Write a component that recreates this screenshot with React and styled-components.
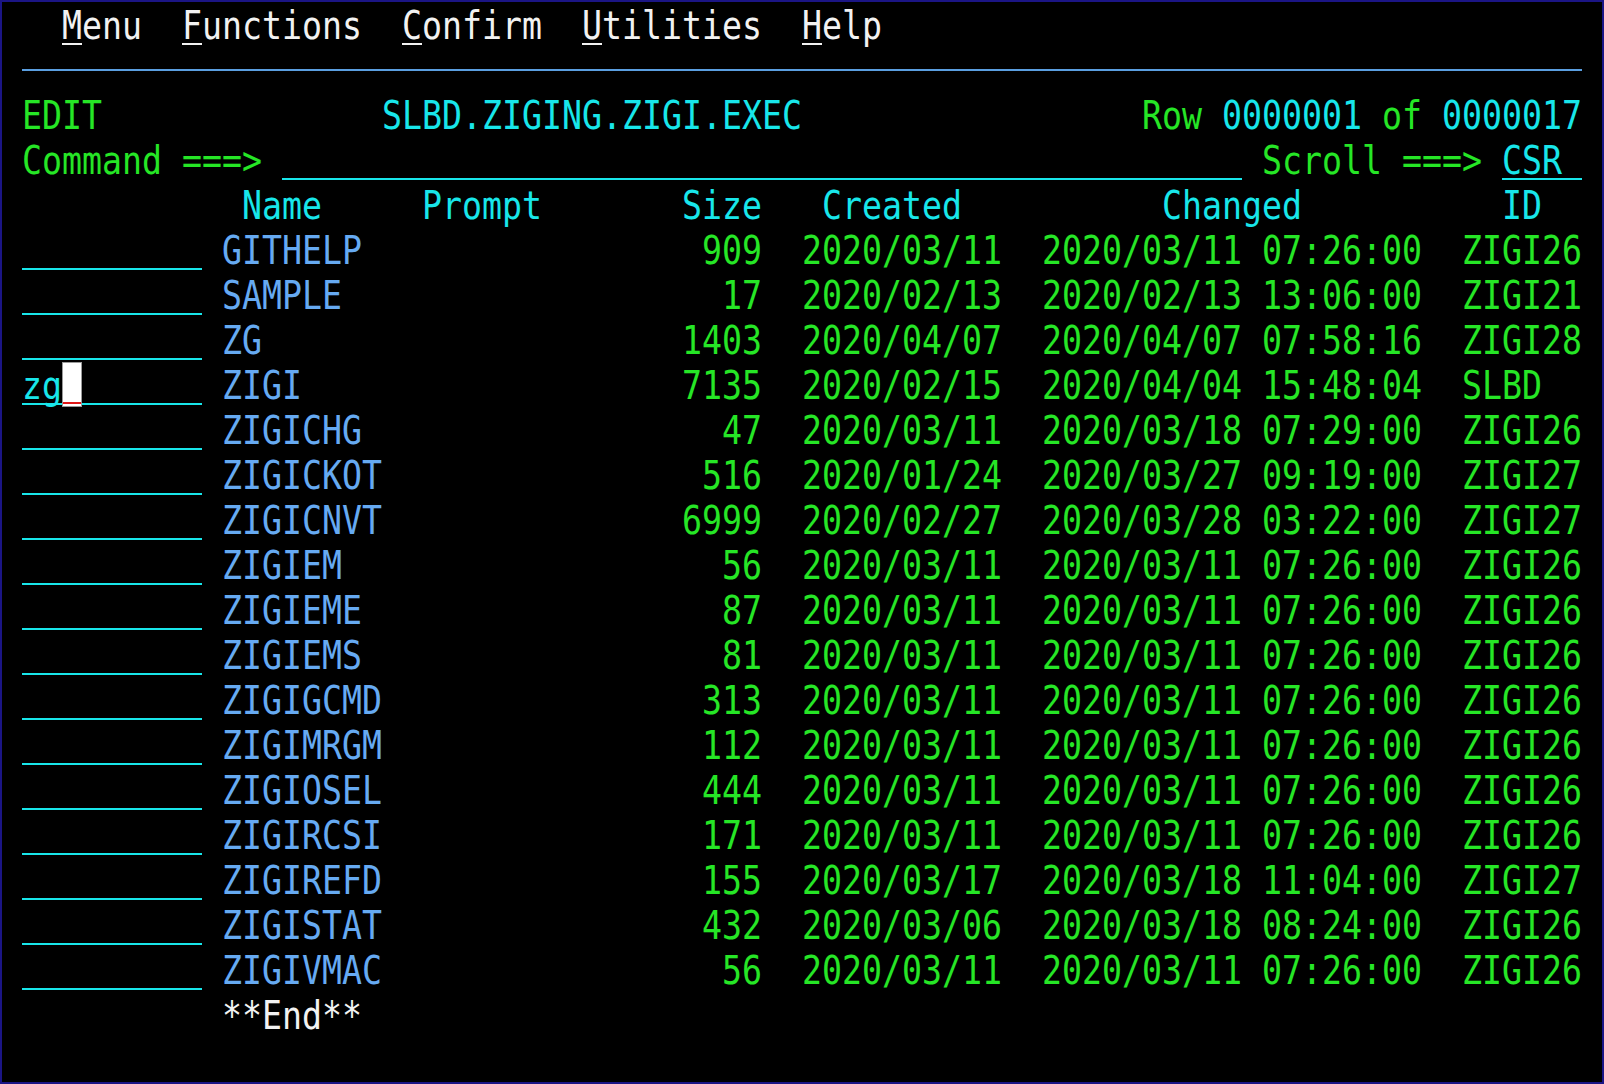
import styled, { createGlobalStyle, css } from "styled-components";

const GREEN = "#26e626";
const CYAN = "#18e6ea";
const BLUE = "#66aaf2";
const WHITE = "#f2f2f2";

const GlobalStyle = createGlobalStyle`
    html, body {
        margin: 0;
        padding: 0;
        background: #000;
    }
`;

const Screen = styled.div`
    width: 1604px;
    height: 1084px;
    box-sizing: border-box;
    border: 2px solid #1b1585;
    background: #000;
    display: flex;
    flex-direction: column;
    font-family: "DejaVu Sans Mono", "Liberation Mono", monospace;
    font-size: 33.22px;
    overflow: hidden;
`;

const Line = styled.div`
    height: 45px;
    display: grid;
    grid-template-columns: repeat(80, 20px);
    grid-template-rows: 45px;
`;

const underline = color => css`
    background-image: linear-gradient(${color}, ${color});
    background-position: left bottom 2px;
    background-size: 100% 2px;
    background-repeat: no-repeat;
`;

const Cell = styled.div`
    grid-column: ${p => p.$col + 1} / span ${p => p.$len};
    grid-row: 1;
    display: flex;
    align-items: center;
    justify-content: ${p => (p.$right ? "flex-end" : "flex-start")};
    color: ${p => p.$color || GREEN};
    white-space: pre;
    ${p => p.$under && underline(p.$under)}
`;

const Glyphs = styled.span`
    display: inline-block;
    line-height: 1;
    transform: translateY(1px) scaleY(1.16);
`;

const Key = styled.span`
    align-self: stretch;
    display: flex;
    align-items: center;
    ${underline(WHITE)}
`;

const Rule = styled.div`
    grid-column: 2 / span 78;
    grid-row: 1;
    align-self: center;
    height: 2px;
    background: #5a9ee0;
`;

const Cursor = styled.div`
    grid-column: ${p => p.$col + 1} / span 1;
    grid-row: 1;
    z-index: 1;
    box-sizing: border-box;
    border: 1px solid #9a9a9a;
    background-color: #fff;
    ${underline("#e01818")}
`;

const Text = ({ col, len, color, right, under, children }) => (
    <Cell $col={col} $len={len || String(children || "").length || 1} $color={color} $right={right} $under={under}>
        {children ? <Glyphs>{children}</Glyphs> : null}
    </Cell>
);

const menuItems = [
    { col: 3, label: "Menu" },
    { col: 9, label: "Functions" },
    { col: 20, label: "Confirm" },
    { col: 29, label: "Utilities" },
    { col: 40, label: "Help" },
];

const members = [
    ["GITHELP", 909, "2020/03/11", "2020/03/11 07:26:00", "ZIGI26"],
    ["SAMPLE", 17, "2020/02/13", "2020/02/13 13:06:00", "ZIGI21"],
    ["ZG", 1403, "2020/04/07", "2020/04/07 07:58:16", "ZIGI28"],
    ["ZIGI", 7135, "2020/02/15", "2020/04/04 15:48:04", "SLBD"],
    ["ZIGICHG", 47, "2020/03/11", "2020/03/18 07:29:00", "ZIGI26"],
    ["ZIGICKOT", 516, "2020/01/24", "2020/03/27 09:19:00", "ZIGI27"],
    ["ZIGICNVT", 6999, "2020/02/27", "2020/03/28 03:22:00", "ZIGI27"],
    ["ZIGIEM", 56, "2020/03/11", "2020/03/11 07:26:00", "ZIGI26"],
    ["ZIGIEME", 87, "2020/03/11", "2020/03/11 07:26:00", "ZIGI26"],
    ["ZIGIEMS", 81, "2020/03/11", "2020/03/11 07:26:00", "ZIGI26"],
    ["ZIGIGCMD", 313, "2020/03/11", "2020/03/11 07:26:00", "ZIGI26"],
    ["ZIGIMRGM", 112, "2020/03/11", "2020/03/11 07:26:00", "ZIGI26"],
    ["ZIGIOSEL", 444, "2020/03/11", "2020/03/11 07:26:00", "ZIGI26"],
    ["ZIGIRCSI", 171, "2020/03/11", "2020/03/11 07:26:00", "ZIGI26"],
    ["ZIGIREFD", 155, "2020/03/17", "2020/03/18 11:04:00", "ZIGI27"],
    ["ZIGISTAT", 432, "2020/03/06", "2020/03/18 08:24:00", "ZIGI26"],
    ["ZIGIVMAC", 56, "2020/03/11", "2020/03/11 07:26:00", "ZIGI26"],
];

function MemberLine({ member, command, cursorAt }) {
    const [name, size, created, changed, id] = member;
    return (
        <Line>
            <Text col={1} len={9} color={CYAN} under={CYAN}>{command}</Text>
            {cursorAt != null && <Cursor $col={cursorAt} />}
            <Text col={11} color={BLUE}>{name}</Text>
            <Text col={34} len={4} right>{String(size)}</Text>
            <Text col={40}>{created}</Text>
            <Text col={52}>{changed}</Text>
            <Text col={73}>{id}</Text>
        </Line>
    );
}

export default function App() {
    return (
        <>
            <GlobalStyle />
            <Screen>
                <Line>
                    {menuItems.map(item => (
                        <Cell key={item.label} $col={item.col} $len={item.label.length} $color={WHITE}>
                            <Key><Glyphs>{item.label[0]}</Glyphs></Key>
                            <Glyphs>{item.label.slice(1)}</Glyphs>
                        </Cell>
                    ))}
                </Line>
                <Line>
                    <Rule />
                </Line>
                <Line>
                    <Text col={1}>EDIT</Text>
                    <Text col={19} color={CYAN}>SLBD.ZIGING.ZIGI.EXEC</Text>
                    <Text col={57}>Row</Text>
                    <Text col={61} color={CYAN}>0000001</Text>
                    <Text col={69}>of</Text>
                    <Text col={72} color={CYAN}>0000017</Text>
                </Line>
                <Line>
                    <Text col={1}>Command ===&gt;</Text>
                    <Text col={14} len={48} color={CYAN} under={CYAN} />
                    <Text col={63}>Scroll ===&gt;</Text>
                    <Text col={75} len={4} color={CYAN} under={CYAN}>CSR</Text>
                </Line>
                <Line>
                    <Text col={12} color={CYAN}>Name</Text>
                    <Text col={21} color={CYAN}>Prompt</Text>
                    <Text col={34} color={CYAN}>Size</Text>
                    <Text col={41} color={CYAN}>Created</Text>
                    <Text col={58} color={CYAN}>Changed</Text>
                    <Text col={75} color={CYAN}>ID</Text>
                </Line>
                {members.map(member => (
                    <MemberLine
                        key={member[0]}
                        member={member}
                        command={member[0] === "ZIGI" ? "zg" : ""}
                        cursorAt={member[0] === "ZIGI" ? 3 : null}
                    />
                ))}
                <Line>
                    <Text col={11} color={WHITE}>**End**</Text>
                </Line>
            </Screen>
        </>
    );
}
